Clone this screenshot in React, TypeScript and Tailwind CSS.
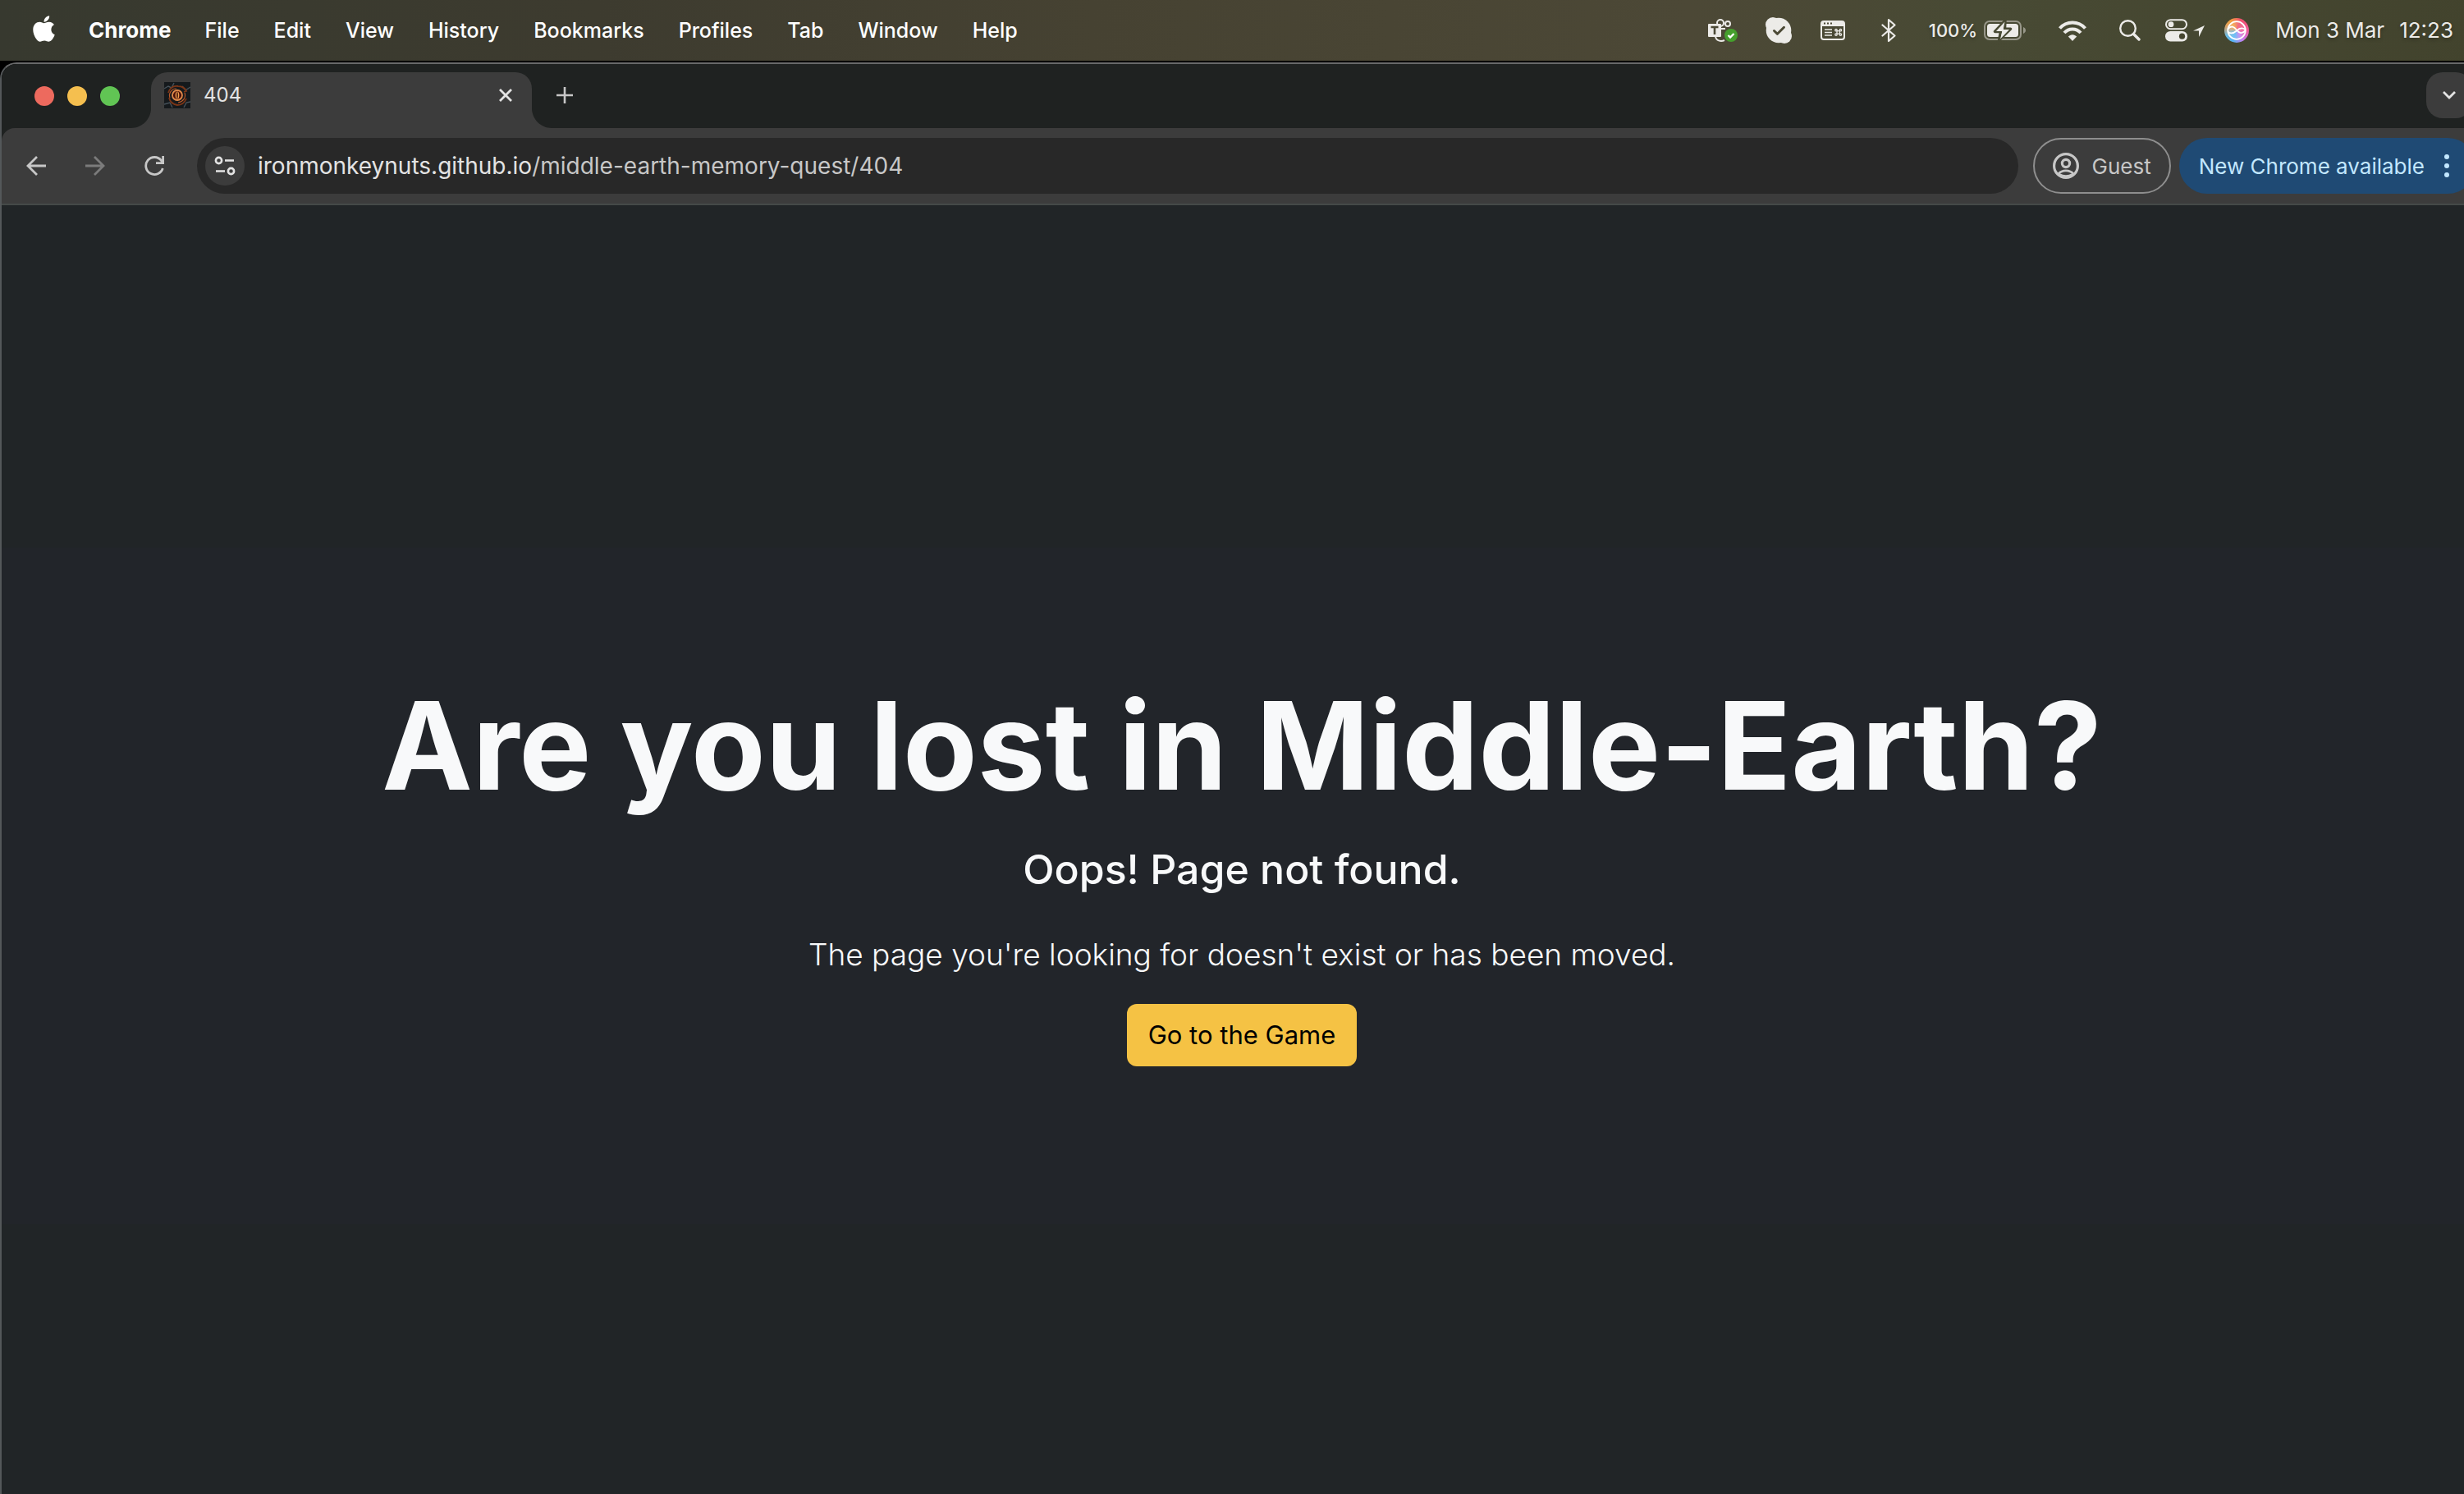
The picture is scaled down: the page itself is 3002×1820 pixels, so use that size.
import React from "react";
import { FaApple } from "react-icons/fa";

const menus = ["File", "Edit", "View", "History", "Bookmarks", "Profiles", "Tab", "Window", "Help"];

function TeamsIcon() {
  return (
    <svg viewBox="0 0 36 28" className="h-7 w-9" aria-hidden="true">
      <g fill="none" stroke="#ecebe8" strokeWidth="2">
        <circle cx="15" cy="5" r="4" />
        <circle cx="24" cy="6" r="3" />
        <path d="M14 12h7M9 22c1 3 4 5 7 5 2 0 3-.5 4-1" />
      </g>
      <rect x="0" y="6" width="16" height="16" rx="1" fill="#ecebe8" />
      <path d="M3.500 10h9M8 10v9" stroke="#4b4935" strokeWidth="2.600" />
      <circle cx="28" cy="20" r="8" fill="#459f2d" />
      <path d="M24.500 20l2.500 2.500 4.500-4.500" fill="none" stroke="#fff" strokeWidth="2.400" />
    </svg>
  );
}

function SkypeIcon() {
  return (
    <svg viewBox="0 0 32 32" className="size-8" aria-hidden="true">
      <circle cx="16" cy="16" r="15.300" fill="#ecebe8" />
      <circle cx="9" cy="9" r="9" fill="#ecebe8" />
      <circle cx="23" cy="23" r="9" fill="#ecebe8" />
      <path d="M10.500 16.500l4 3.800 8-8" fill="none" stroke="#4b4935" strokeWidth="3" strokeLinecap="round" strokeLinejoin="round" />
    </svg>
  );
}

function ShortcutsWindowIcon() {
  return (
    <svg viewBox="0 0 30 24" className="h-6 w-[30px]" aria-hidden="true">
      <rect x="1" y="1" width="28" height="22" rx="3" fill="none" stroke="#ecebe8" strokeWidth="2" />
      <path d="M1 2h28v5H1z" fill="#ecebe8" />
      <path d="M4 3.500h2M8 3.500h2M12 3.500h2" stroke="#4a4935" strokeWidth="2" />
      <path d="M5 11h9M5 14.500h9M5 18h9" stroke="#ecebe8" strokeWidth="1.600" />
      <g fill="none" stroke="#ecebe8" strokeWidth="1.300">
        <rect x="20" y="12.700" width="3.400" height="3.400" />
        <circle cx="19" cy="11.700" r="1.200" />
        <circle cx="24.400" cy="11.700" r="1.200" />
        <circle cx="19" cy="17.100" r="1.200" />
        <circle cx="24.400" cy="17.100" r="1.200" />
      </g>
    </svg>
  );
}

function BluetoothIcon() {
  return (
    <svg viewBox="0 0 18 30" className="h-[30px] w-[18px]" fill="none" stroke="#ecebe8" strokeWidth="2.200" strokeLinejoin="round" strokeLinecap="round" aria-hidden="true">
      <path d="M1.500 8.500L16.500 21.500 9 28V2l7.500 6.500L1.500 21.500" />
    </svg>
  );
}

function BatteryIcon() {
  return (
    <svg viewBox="0 0 51 24" className="h-6 w-[51px]" aria-hidden="true">
      <rect x="1" y="1" width="44" height="22" rx="6" fill="none" stroke="#98978a" strokeWidth="2" />
      <rect x="4" y="4" width="38" height="16" rx="3.500" fill="#ecebe8" />
      <path d="M48 8v8c1.800-.8 3-2.200 3-4s-1.200-3.200-3-4z" fill="#98978a" />
      <path d="M26 0L13.500 13.500h7L18.500 24 32.500 10.200h-7z" fill="#ecebe8" stroke="#484a34" strokeWidth="3.400" strokeLinejoin="round" />
      <path d="M25.500 1.500L15 13h7.500L20 22.500 31 11h-7.500z" fill="#ecebe8" />
    </svg>
  );
}

function WifiIcon() {
  return (
    <svg viewBox="0 0 34 25" className="h-[25px] w-[34px]" fill="none" stroke="#ecebe8" strokeWidth="4" aria-hidden="true">
      <path d="M1.500 9.500C5.500 5 11 2.500 17 2.500s11.500 2.500 15.500 7" />
      <path d="M7 15c2.600-2.900 6.100-4.500 10-4.500s7.400 1.600 10 4.500" />
      <path d="M17 25l-5.200-5.400c1.400-1.500 3.200-2.400 5.200-2.400s3.800.9 5.200 2.400z" fill="#ecebe8" stroke="none" />
    </svg>
  );
}

function SearchIcon() {
  return (
    <svg viewBox="0 0 26 26" className="size-[26px]" fill="none" stroke="#ecebe8" strokeLinecap="round" aria-hidden="true">
      <circle cx="10.500" cy="10.500" r="9.300" strokeWidth="2.400" />
      <path d="M17.500 17.500l6.500 6.500" strokeWidth="3.400" />
    </svg>
  );
}

function ControlCenterIcon() {
  return (
    <svg viewBox="0 0 48 28" className="h-7 w-12" aria-hidden="true">
      <rect x="1" y="1.200" width="25" height="11" rx="5.500" fill="none" stroke="#ecebe8" strokeWidth="2" />
      <circle cx="7" cy="6.700" r="3.400" fill="#ecebe8" />
      <rect x="0" y="15" width="27" height="12.500" rx="6.200" fill="#ecebe8" />
      <circle cx="20.500" cy="21.200" r="3.600" fill="#45452f" />
      <path d="M48 8L34 14.500h7V22z" fill="#ecebe8" />
    </svg>
  );
}

function SiriIcon() {
  return (
    <span className="flex size-[30px] items-center justify-center rounded-full bg-[conic-gradient(from_20deg,#f0506e,#ee5a9a_20%,#c77ef0_35%,#55b6f5_50%,#6db9e0_62%,#dfa060_76%,#f2a03c_86%,#f0506e)]">
      <svg viewBox="0 0 30 30" className="size-[30px]" fill="none" stroke="#fff" strokeWidth="1.800" aria-hidden="true">
        <circle cx="15" cy="15" r="10.800" fill="#ffffff" fillOpacity=".15" />
        <path d="M4.500 13c4-4 7-3 10.500 1.500 3.500 4.500 6.500 5 10.500 1" />
        <path d="M4.500 17c4 3 7 1.500 10.500-1.500 3.500-3.500 6.500-4.500 10.500-1.500" />
      </svg>
    </span>
  );
}

function Favicon() {
  return (
    <svg viewBox="0 0 32 32" className="size-8" aria-hidden="true">
      <rect width="32" height="32" fill="#15191c" />
      <path d="M0 8l5-3 4 2 3-6M32 6l-6 4-4-5M0 27l7-2 3 6M32 24l-5 1-3 6" fill="none" stroke="#46525a" strokeWidth="1.400" />
      <g fill="none">
        <path d="M5 13c2-6 6-9 12-8 5 0 8 2 10 6l-3 1M27 20c-2 5-6 8-11 8-5-1-9-4-10-9" stroke="#7a3517" strokeWidth="1.800" />
        <path d="M7 19c-2-5 2-11 8-11M25 13c2 6-2 11-8 12" stroke="#b9582a" strokeWidth="1.200" />
        <circle cx="16" cy="16" r="6" fill="#4a1009" stroke="#e0894a" strokeWidth="1.800" />
      </g>
      <ellipse cx="16" cy="16" rx="2.300" ry="4.600" fill="#f0a050" />
      <ellipse cx="16" cy="16" rx=".8" ry="4" fill="#3a0d06" />
    </svg>
  );
}

function MenuBar() {
  return (
    <header className="flex h-[74px] items-center justify-between bg-[linear-gradient(90deg,#37392f,#3d3b2f_24%,#464232_44%,#4c4836_68%,#484a34_80%,#42432d)] pr-[35px] pl-10 text-[26px] leading-8 text-white [text-shadow:0_2px_4px_rgba(0,0,0,.3)]">
      <nav className="flex items-center" aria-label="Menu bar">
        <button type="button" aria-label="Apple menu" className="-mt-1 mr-[21px]">
          <FaApple className="h-9 w-[27px]" />
        </button>
        <button type="button" className="px-5 font-bold">Chrome</button>
        {menus.map((m) => (
          <button type="button" key={m} className="px-[21px] text-[25px] font-medium">{m}</button>
        ))}
      </nav>
      <div className="flex items-center text-[#ecebe8]">
        <TeamsIcon />
        <span className="ml-[34px]"><SkypeIcon /></span>
        <span className="ml-[35px]"><ShortcutsWindowIcon /></span>
        <span className="ml-11"><BluetoothIcon /></span>
        <span className="ml-10 text-[22px] font-medium">100%</span>
        <span className="ml-2"><BatteryIcon /></span>
        <span className="ml-10"><WifiIcon /></span>
        <span className="ml-10"><SearchIcon /></span>
        <span className="ml-[30px]"><ControlCenterIcon /></span>
        <span className="ml-6"><SiriIcon /></span>
        <span className="ml-8">Mon 3 Mar</span>
        <span className="ml-[18px]">12:23</span>
      </div>
    </header>
  );
}

function TabFlare({ side }: { side: "left" | "right" }) {
  return (
    <svg viewBox="0 0 24 24" className={side === "left" ? "size-6" : "size-6 -scale-x-100"} fill="#3c3c3c" aria-hidden="true">
      <path d="M24 0v24H0C13 24 24 13 24 0z" />
    </svg>
  );
}

function TabStrip() {
  return (
    <div className="flex h-[78px] items-end bg-[#1f2221] pr-3">
      <div className="mb-[27px] ml-10 flex gap-4">
        <button type="button" aria-label="Close window" className="size-6 rounded-full bg-[#ed6a5e]" />
        <button type="button" aria-label="Minimize window" className="size-6 rounded-full bg-[#f5bf4f]" />
        <button type="button" aria-label="Zoom window" className="size-6 rounded-full bg-[#61c554]" />
      </div>
      <div className="ml-[14px] flex items-end">
        <TabFlare side="left" />
        <div className="flex h-[68px] w-[464px] items-center rounded-t-[20px] bg-[#3c3c3c] pr-5 pb-3 pl-4 text-2xl text-[#e3e3e3]">
          <Favicon />
          <span className="ml-4 flex-1">404</span>
          <button type="button" aria-label="Close tab" className="p-1">
            <svg viewBox="0 0 16 16" className="size-4" stroke="#e3e3e3" strokeWidth="2.800" aria-hidden="true">
              <path d="M1 1l14 14M15 1L1 15" />
            </svg>
          </button>
        </div>
        <TabFlare side="right" />
      </div>
      <button type="button" aria-label="New tab" className="mb-[30px] ml-1.5">
        <svg viewBox="0 0 20 20" className="size-5" stroke="#c7c7c7" strokeWidth="2.600" aria-hidden="true">
          <path d="M10 0v20M0 10h20" />
        </svg>
      </button>
      <button type="button" aria-label="Search tabs" className="mb-3 ml-auto flex size-14 items-center justify-center rounded-[20px] bg-[#3c3c3c]">
        <svg viewBox="0 0 16 10" className="h-2.5 w-4" fill="none" stroke="#e3e3e3" strokeWidth="2.800" aria-hidden="true">
          <path d="M1 1l7 7 7-7" />
        </svg>
      </button>
    </div>
  );
}

function Toolbar() {
  return (
    <div className="bg-[#1f2221]">
      <div className="flex h-[94px] items-center rounded-tl-2xl border-b-2 border-[#454a48] bg-[#3c3c3c] pr-2 pl-[30px]">
        <button type="button" aria-label="Back">
          <svg viewBox="0 0 24 24" className="size-6" fill="none" stroke="#c7c7c7" strokeWidth="2.800" aria-hidden="true">
            <path d="M24 12H2M13 1L2 12l11 11" />
          </svg>
        </button>
        <button type="button" aria-label="Forward" disabled className="ml-12">
          <svg viewBox="0 0 24 24" className="size-6" fill="none" stroke="#7b7b7b" strokeWidth="2.800" aria-hidden="true">
            <path d="M0 12h22M11 1l11 11-11 11" />
          </svg>
        </button>
        <button type="button" aria-label="Reload" className="ml-12">
          <svg viewBox="0 0 24 24" className="size-6" fill="none" stroke="#c7c7c7" strokeWidth="2.800" aria-hidden="true">
            <path d="M22.300 15A10.500 10.500 0 1 1 20.500 5.500L22 8M22.600 0v8.600H14" />
          </svg>
        </button>
        <div className="ml-10 flex h-[68px] flex-1 items-center rounded-full bg-[#282828] px-2.5 text-[28px]">
          <button type="button" aria-label="View site information" className="flex size-12 items-center justify-center rounded-full bg-[#3c3c3c]">
            <svg viewBox="0 0 26 24" className="h-6 w-[26px]" fill="none" stroke="#e3e3e3" strokeWidth="2.600" aria-hidden="true">
              <circle cx="5.500" cy="5.500" r="3.600" />
              <path d="M13 5.500h11M2 18.500h11" />
              <circle cx="20.500" cy="18.500" r="3.600" />
            </svg>
          </button>
          <p className="ml-4 flex-1 text-[#c7c7c7]">
            <span className="text-[#e3e3e3]">ironmonkeynuts.github.io</span>/middle-earth-memory-quest/404
          </p>
        </div>
        <button type="button" className="ml-[18px] flex h-[68px] items-center rounded-full border-2 border-[#8e8e8e] px-[22px] text-[26px] text-[#c7c7c7]">
          <svg viewBox="0 0 32 32" className="mr-4 size-8" fill="none" stroke="#c7c7c7" strokeWidth="3.200" aria-hidden="true">
            <circle cx="16" cy="16" r="14.400" />
            <circle cx="16" cy="13" r="4.600" />
            <path d="M6.500 26c5-5.500 14-5.500 19 0M8 26.500c5 2.600 11 2.600 16 0" strokeWidth="2.600" />
          </svg>
          Guest
        </button>
        <button type="button" className="ml-2.5 flex h-[68px] items-center rounded-full bg-[#1f4a74] pr-8 pl-6 text-[26px] text-[#c2e7ff]">
          New Chrome available
          <svg viewBox="0 0 6 28" className="ml-6 h-7 w-1.5" fill="#c2e7ff" aria-hidden="true">
            <circle cx="3" cy="3" r="3" />
            <circle cx="3" cy="14" r="3" />
            <circle cx="3" cy="25" r="3" />
          </svg>
        </button>
      </div>
    </div>
  );
}

export default function App() {
  return (
    <div className="h-screen overflow-hidden bg-black font-['Inter',sans-serif]">
      <div className="flex h-full w-[calc(100%+22px)] flex-col">
        <MenuBar />
        <div className="mt-0.5 flex flex-1 flex-col overflow-hidden rounded-tl-[20px] border-t-2 border-l-2 border-t-[#68696a] border-l-[#54585a]">
          <TabStrip />
          <Toolbar />
          <main className="flex flex-1 flex-col justify-center bg-[#212527] pt-22 text-[#f8f9fa]">
            <section className="flex flex-col items-center bg-[#22252a] pt-[146px] pb-48 text-center">
              <h1 className="text-[148px] leading-[192px] font-bold">Are you lost in Middle-Earth?</h1>
              <p className="mt-6 text-[50px] leading-[60px] font-medium">Oops! Page not found.</p>
              <p className="mt-11 text-[37px] leading-[60px] font-light">The page you're looking for doesn't exist or has been moved.</p>
              <a href="#game" className="mt-[30px] rounded-xl bg-[#f5c244] px-[26px] py-3.5 text-[31px] leading-[48px] text-black">Go to the Game</a>
            </section>
          </main>
        </div>
      </div>
    </div>
  );
}
